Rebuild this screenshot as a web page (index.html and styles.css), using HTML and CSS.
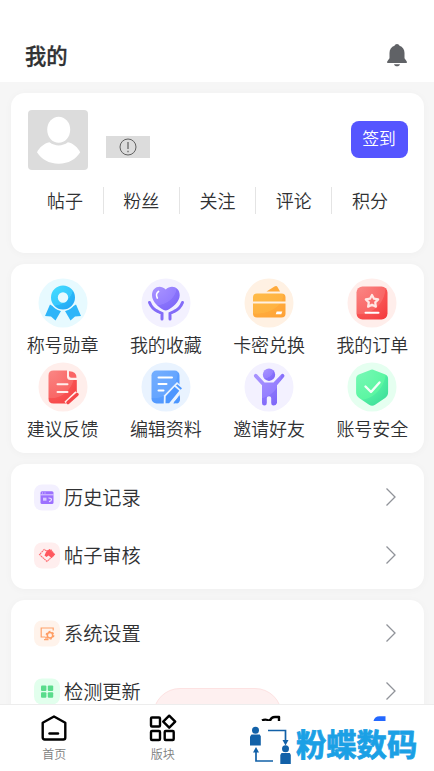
FILE: index.html
```html
<!DOCTYPE html>
<html lang="zh-CN">
<head>
<meta charset="utf-8">
<title>我的</title>
<link rel="stylesheet" href="styles.css">
</head>
<body>
<svg class="defs" width="0" height="0">
  <defs>
    <radialGradient id="blue" cx=".1" cy="0" r="1.250"><stop stop-color="#43dcff"/><stop offset=".66" stop-color="#38c8fd"/><stop offset=".68" stop-color="#28b5f8"/><stop offset="1" stop-color="#25a5f5"/></radialGradient>
    <radialGradient id="purple" cx=".1" cy="0" r="1.250"><stop stop-color="#a994ff"/><stop offset=".62" stop-color="#957fff"/><stop offset=".64" stop-color="#8872fb"/><stop offset="1" stop-color="#7c64f8"/></radialGradient>
    <radialGradient id="orange" cx=".1" cy="0" r="1.250"><stop stop-color="#ffbb48"/><stop offset=".66" stop-color="#ffb342"/><stop offset=".68" stop-color="#ffaa3c"/><stop offset="1" stop-color="#ffa236"/></radialGradient>
    <radialGradient id="red" cx=".1" cy="0" r="1.250"><stop stop-color="#fa8583"/><stop offset=".66" stop-color="#f96766"/><stop offset=".68" stop-color="#f85252"/><stop offset="1" stop-color="#f53b3e"/></radialGradient>
    <radialGradient id="sky" cx=".1" cy="0" r="1.250"><stop stop-color="#74aeff"/><stop offset=".66" stop-color="#65a5ff"/><stop offset=".68" stop-color="#579cff"/><stop offset="1" stop-color="#4a94ff"/></radialGradient>
    <radialGradient id="green" cx=".1" cy="0" r="1.250"><stop stop-color="#78f8b6"/><stop offset=".66" stop-color="#5cf6a2"/><stop offset=".68" stop-color="#4eeca1"/><stop offset="1" stop-color="#3bdb98"/></radialGradient>
  </defs>
</svg>

<header class="header">
  <h1>我的</h1>
  <svg class="bell" width="20" height="23" viewBox="0 0 20 23"><path d="M10 0c1.300 0 2 .7 2.500 1.800 3.200 1 5 3.600 5 7.200v5.200l2.300 3.400V19H.2v-1.400l2.300-3.400V9c0-3.600 1.800-6.200 5-7.200C8 .7 8.700 0 10 0zM7 20.200h6c-.5 1.400-1.500 2-3 2s-2.500-.6-3-2z" fill="#606266"/></svg>
</header>

<main class="content">
  <section class="card profile">
    <div class="user">
      <svg class="avatar" width="60" height="60" viewBox="0 0 60 60"><rect width="60" height="60" rx="4" fill="#dcdcdc"/><ellipse cx="30.700" cy="19.700" rx="11.500" ry="13" fill="#fff"/><path d="M21.500 32.300c5.500 4.200 12.900 4.200 18.400 0 5.500 1 10 5.400 12.300 10-4.500 7-11.500 11.400-21.500 11.400S13.500 49.300 9 42.300c2.300-4.600 7-9 12.500-10z" fill="#fff"/></svg>
      <span class="level"><svg width="18" height="18" viewBox="0 0 18 18" fill="none" stroke="#606060"><circle cx="9" cy="9" r="8"/><path d="M9 4v7M9 12.700v1.500" stroke-width="1.200"/></svg></span>
      <button class="sign">签到</button>
    </div>
    <div class="stats"><span>帖子</span><span>粉丝</span><span>关注</span><span>评论</span><span>积分</span></div>
  </section>

  <section class="card grid">
    <div class="entry"><svg viewBox="0 0 50 50"><circle cx="25" cy="25" r="24.500" fill="#e7faff"/><path d="M12 26.500 7 38l6 .5 4.500 4 5.500-9.500zM38 26.500 43 38l-6 .5-4.500 4-5.500-9.500z" fill="#2db5f9"/><circle cx="25" cy="19.500" r="13.500" fill="#e7faff"/><path fill-rule="evenodd" d="M25 7.500a12 12 0 1 1 0 24 12 12 0 0 1 0-24zm0 6.800a5.200 5.200 0 1 0 0 10.400 5.200 5.200 0 0 0 0-10.400z" fill="url(#blue)"/></svg><span>称号勋章</span></div>
    <div class="entry"><svg viewBox="0 0 50 50"><circle cx="25" cy="25" r="24.500" fill="#f3f1ff"/><path d="M24.700 11.500c5-5 14-3 14 5.800 0 6.500-7.500 12.400-11.500 14.500q-2.500 1.300-5 0c-4-2.100-11.200-8-11.200-14.500 0-8.800 8.700-10.800 13.700-5.800z" fill="url(#purple)"/><path d="M17.500 13.500c-2 1.200-2.500 4-1.200 6.500" fill="none" stroke="#fff" stroke-width="1.700" stroke-linecap="round"/><path d="M8.500 24.500q2.500 6.500 8.500 9l4 2v5.500M41.500 24.500q-2.500 6.500-8.500 9l-4 2v5.500" fill="none" stroke="#836cf8" stroke-width="3" stroke-linecap="round"/></svg><span>我的收藏</span></div>
    <div class="entry"><svg viewBox="0 0 50 50"><circle cx="25" cy="25" r="24.500" fill="#fff1e3"/><path d="m22.500 13.500 8-5q2-1 3 .5l2.500 4.500z" fill="#ffaa3b"/><rect x="9" y="15.500" width="32.500" height="24" rx="4" fill="url(#orange)"/><path d="M8.500 24.500h34" stroke="#fff1e3" stroke-width="2"/><path d="M32.700 33.500h5.600l-1 2.700h-5.600z" fill="#fff"/></svg><span>卡密兑换</span></div>
    <div class="entry"><svg viewBox="0 0 50 50"><circle cx="25" cy="25" r="24.500" fill="#ffeeeb"/><rect x="9.500" y="8.500" width="31" height="33" rx="6" fill="url(#red)"/><path d="m25 17 2 3.700 4.200.7-3 3 .7 4.300-3.900-2-3.900 2 .7-4.300-3-3 4.200-.7z" fill="none" stroke="#ffe8e5" stroke-width="2.200" stroke-linejoin="round"/><path d="M18.500 34.700h13" stroke="#fff" stroke-width="2" stroke-linecap="round"/></svg><span>我的订单</span></div>
    <div class="entry"><svg viewBox="0 0 50 50"><circle cx="25" cy="25" r="24.500" fill="#ffeeeb"/><path d="M15.500 8.500H29v6q0 3.500 3.500 3.500h6.300v13.500L28.500 41.500h-13q-5 0-5-5v-23q0-5 5-5z" fill="url(#red)"/><path d="M31 9.200q7.500-.2 7.500 6.500h-5q-2.500 0-2.500-2.500z" fill="#fa6464"/><path d="M19.500 22.300h10M19.500 30h10" stroke="#ffeeeb" stroke-width="2" stroke-linecap="round"/><path d="m28.500 42 11-10.500" stroke="#ffeeeb" stroke-width="6"/><path d="m30 40.500 9-8" stroke="#f64649" stroke-width="3.500" stroke-linecap="round"/></svg><span>建议反馈</span></div>
    <div class="entry"><svg viewBox="0 0 50 50"><circle cx="25" cy="25" r="24.500" fill="#e9f3ff"/><rect x="10.500" y="8.500" width="28" height="33" rx="5" fill="url(#sky)"/><path d="M17.500 15.500H31M17.500 22h8M17.500 28.500h5" stroke="#fff" stroke-width="2" stroke-linecap="round"/><path d="m22.700 43 .2-9.500L36 20l7 6.500L31.500 43z" fill="#e9f3ff"/><path d="m24.500 41.200.2-7 8.900-9.500 4.700 4-10.200 12.500zM35 23.500l1.300-1.300 4.700 4-1.300 1.500z" fill="#4c96ff"/><path d="m32.500 40.500 6.500-6.800v3.500q0 3.300-3 4.300z" fill="#4c96ff"/></svg><span>编辑资料</span></div>
    <div class="entry"><svg viewBox="0 0 50 50"><circle cx="25" cy="25" r="24.500" fill="#f3f1ff"/><circle cx="25" cy="12.700" r="6.200" fill="url(#purple)"/><path d="M12.900 12.200q-1.300-1-2.500.2-1.100 1.200-.1 2.500l7.700 8.400V41q0 2.500 2.400 2.500t2.400-2.500v-5q0-1.700 2.200-1.700t2.200 1.700v5q0 2.500 2.400 2.500T33 41V23.300l7-8.400q1-1.300-.1-2.500-1.200-1.200-2.500-.2l-7.900 8.300h-9z" fill="url(#purple)"/></svg><span>邀请好友</span></div>
    <div class="entry"><svg viewBox="0 0 50 50"><circle cx="25" cy="25" r="24.500" fill="#e5fff0"/><path d="M22.800 8.200q2.300-1.500 4.600 0l10.400 4.100q3.300 1.300 3.300 4.500v13.500q0 3.600-3 5.600l-10 6.800q-3 2.100-6 0l-10-6.800q-3-2-3-5.600V16.800q0-3.200 3.300-4.500z" fill="url(#green)"/><path d="m18.500 24.500 5.500 5.500 8.500-9.500" fill="none" stroke="#f2fff8" stroke-width="2.400" stroke-linecap="round" stroke-linejoin="round"/></svg><span>账号安全</span></div>
  </section>

  <section class="card list">
    <div class="row"><svg class="tile" viewBox="0 0 26 26"><rect width="26" height="26" rx="8" fill="#f3f0ff"/><rect x="6.500" y="6.800" width="13" height="12.700" rx="1.500" fill="#9c70ff"/><path d="M6.500 10.300h13M8 8.500h1M10.500 8.500h1" stroke="#e8deff" stroke-width=".9"/><path d="M9 13.200h3.500v3H9z" fill="#d9c9ff"/><path d="M14.500 13.500q3 0 3 1.500t-2.500 2.200" fill="none" stroke="#e8deff" stroke-width="1.200"/></svg><span>历史记录</span><svg class="chevron" viewBox="0 0 10 18"><path d="m.5.500 8.500 8.500-8.500 8.500"/></svg></div>
    <div class="row"><svg class="tile" viewBox="0 0 26 26"><rect width="26" height="26" rx="8" fill="#ffeeee"/><path d="M12.500 8.500 10.200 7 5.500 12l7.500 7 7.500-7-3.500-4.700z" fill="none" stroke="#ff6c72" stroke-width="1.100" stroke-dasharray="1.800 .5"/><path d="m12 9.500 3.500-3 5.500 5.500-3.500 3.500-3-2.500-2 1.500-2-1.500z" fill="#ff575e"/></svg><span>帖子审核</span><svg class="chevron" viewBox="0 0 10 18"><path d="m.5.500 8.500 8.500-8.500 8.500"/></svg></div>
  </section>

  <section class="card list">
    <div class="row"><svg class="tile" viewBox="0 0 26 26"><rect width="26" height="26" rx="8" fill="#fff3eb"/><path d="M11.500 16.500H7.200V7.500h12v2.500M10 19.200h4.500M12 16.500v2.500" fill="none" stroke="#ffa169" stroke-width="1.200"/><circle cx="16" cy="14.700" r="2.700" fill="none" stroke="#ff9d63" stroke-width="1.500"/><circle cx="16" cy="14.700" r="3.800" fill="none" stroke="#ff9d63" stroke-width="1.200" stroke-dasharray="2 1.980"/></svg><span>系统设置</span><svg class="chevron" viewBox="0 0 10 18"><path d="m.5.500 8.500 8.500-8.500 8.500"/></svg></div>
    <div class="row"><svg class="tile" viewBox="0 0 26 26"><rect width="26" height="26" rx="8" fill="#e2ffed"/><g fill="#5adc8c"><rect x="7" y="7" width="5.400" height="5.400" rx="1"/><rect x="13.800" y="7" width="5.400" height="5.400" rx="1"/><rect x="7" y="13.800" width="5.400" height="5.400" rx="1"/><rect x="13.800" y="13.800" width="5.400" height="5.400" rx="1"/></g></svg><span>检测更新</span><svg class="chevron" viewBox="0 0 10 18"><path d="m.5.500 8.500 8.500-8.500 8.500"/></svg></div>
  </section>
</main>

<div class="logout"></div>

<nav class="tabbar">
  <div class="tab"><svg width="28" height="28" viewBox="0 0 28 28"><path d="m14 2.500 11.300 6.300v14.700q0 2-2 2H4.700q-2 0-2-2V8.800z"/><path d="M9.500 19.500h8.500" stroke-linecap="round"/></svg><span>首页</span></div>
  <div class="tab"><svg width="28" height="28" viewBox="0 0 28 28"><rect x="2" y="3.500" width="9" height="9" rx="1"/><path d="m20.200 1.700 6 6-6 6-6-6z"/><rect x="2" y="17" width="9" height="9" rx="1"/><rect x="15.700" y="17" width="9" height="9" rx="1"/></svg><span>版块</span></div>
  <div class="tab"><svg width="28" height="28" viewBox="0 0 28 28"><path d="M5 6.500q3.500-2 8 .500 1-4 5-4h4V7"/></svg></div>
  <div class="tab"><svg width="28" height="28" viewBox="0 0 28 28"><path class="active" d="M7.500 7q1-4.800 6-4.800h6V8z"/></svg></div>
</nav>

<div class="brand">
  <svg width="43" height="38" viewBox="0 0 43 38"><g fill="#1261a8"><circle cx="6.500" cy="4.300" r="3.500"/><path d="M2.500 8.500h8.300l1 2v9H1v-9z"/><circle cx="36.500" cy="22.800" r="3.500"/><path d="M32.500 27h8.300l1 2v9H31.300v-9z"/><path d="m33.500 14 3 5.500 3-5.500zM4 26.500 7 21l3 5.500z"/></g><path d="M19 4.500h17.500V15M7 25v10h17" fill="none" stroke="#1261a8" stroke-width="1.700"/></svg>
  <span>粉蝶数码</span>
</div>
</body>
</html>
```
FILE: styles.css
```css
* { box-sizing: border-box; }
html, body { height: 771px; overflow: hidden; }
body {
  margin: 0;
  background: #f6f6f6;
  color: #303133;
  font-family: "Noto Sans CJK SC DemiLight", "Noto Sans CJK SC", sans-serif;
  font-weight: 350;
}
.defs { position: absolute; }
.header {
  height: 82px;
  padding: 28px 27px 0 25px;
  background: #fff;
  display: flex;
  align-items: center;
  justify-content: space-between;
}
h1 {
  margin: 0;
  font-family: "Noto Sans CJK SC", sans-serif;
  font-size: 21.300px;
  font-weight: 500;
  line-height: 32px;
  -webkit-text-stroke: .3px #303133;
}
.bell { margin-top: 1px; }
.content { padding: 11px 10px 0 11px; display: flex; flex-direction: column; gap: 11px; }
.card { background: #fff; border-radius: 14px; box-shadow: 0 1px 8px rgba(0, 0, 0, .03); }
.profile { height: 160px; padding: 17px 16.500px 0; }
.user { display: flex; height: 60px; align-items: center; }
.avatar { margin-left: .5px; }
.level {
  width: 44px;
  height: 22px;
  margin: 14px 0 0 18px;
  background: #dcdcdc;
  display: flex;
  align-items: center;
  justify-content: center;
}
.sign {
  width: 57px;
  height: 37px;
  margin: -1px 0 0 auto;
  padding: 0 0 2px;
  border: 0;
  border-radius: 8px;
  background: #5555ff;
  color: #fff;
  font: inherit;
  font-size: 16.800px;
  line-height: 35px;
}
.stats { display: flex; margin-top: 17px; }
.stats span { flex: 1; height: 27px; line-height: 27px; font-size: 18px; text-align: center; }
.stats span + span { border-left: 1px solid #e4e4e4; }
.grid { height: 189px; padding-top: 13.500px; display: grid; grid-template-columns: repeat(4, 1fr); grid-auto-rows: 84px; }
.entry { display: flex; flex-direction: column; align-items: center; font-size: 18px; line-height: 26px; }
.entry svg { width: 50px; height: 50px; margin-bottom: 3.500px; }
.list { height: 125px; padding: 4px 28px 0 23px; }
.row { height: 58px; display: flex; align-items: center; font-size: 19.200px; line-height: 28px; }
.row span { margin: -1px 0 0 4px; }
.tile { width: 26px; height: 27px; }
.chevron { width: 10px; height: 18px; margin: -1px 0 0 auto; fill: none; stroke: #909399; stroke-width: 1.300; }
.logout {
  position: absolute;
  left: 153px;
  top: 688px;
  width: 129px;
  height: 54px;
  border: 1px solid #fde2e2;
  border-radius: 27px;
  background: #fef0f0;
}
.tabbar {
  position: fixed;
  left: 0;
  right: 0;
  bottom: 0;
  height: 67px;
  padding-top: 9px;
  border-top: 1px solid #ededed;
  background: #fff;
  display: grid;
  grid-template-columns: repeat(4, 1fr);
}
.tab { display: flex; flex-direction: column; align-items: center; color: #7d7e80; font-size: 12px; line-height: 18px; }
.tab span { margin-top: 3px; }
.tab svg { fill: none; stroke: #000; stroke-width: 2.400; stroke-linejoin: round; }
.tab .active { fill: #2468ff; stroke: none; }
.brand {
  position: fixed;
  left: 249px;
  top: 721px;
  width: 185px;
  height: 50px;
  padding: 5px 0 0;
  background: #fff;
  display: flex;
  align-items: flex-start;
}
.brand span {
  margin: -5px 0 0 4px;
  color: #1ba0e5;
  font-family: "Noto Sans CJK SC", sans-serif;
  font-size: 30.300px;
  font-weight: 700;
  line-height: 44px;
  white-space: nowrap;
  -webkit-text-stroke: .8px #1ba0e5;
  stroke-linejoin: round;
}
```
